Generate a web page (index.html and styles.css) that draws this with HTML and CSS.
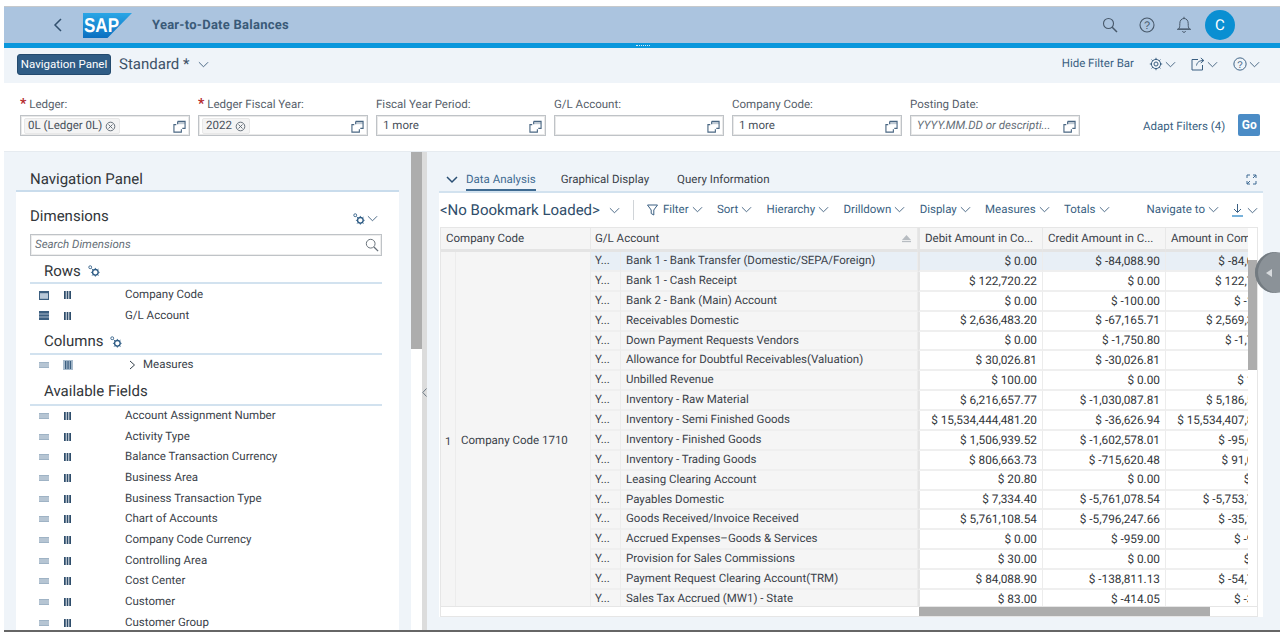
FILE: index.html
```html
<!DOCTYPE html>
<html lang="en">
<head>
<meta charset="utf-8">
<title>Year-to-Date Balances</title>
<link rel="stylesheet" href="styles.css">
</head>
<body>
<svg class="defs" width="0" height="0" aria-hidden="true">
  <defs>
    <symbol id="chev" viewBox="0 0 12 12"><path d="M1 3.5 6 8.5 11 3.5" fill="none" stroke="currentColor" stroke-width="1"/></symbol>
    <symbol id="vh" viewBox="0 0 14 14"><path d="M5 1.5h8v7.5h-3M5 1.5v3M3.5 5H1v8h8v-3" fill="none" stroke="currentColor" stroke-width="1.2"/><path d="M5 1.5h8v3H5z" fill="currentColor" opacity=".35"/></symbol>
    <symbol id="x" viewBox="0 0 12 12"><circle cx="6" cy="6" r="4.7" fill="none" stroke="currentColor"/><path d="M3.8 3.8 8.2 8.2M8.2 3.8 3.8 8.2" stroke="currentColor"/></symbol>
    <symbol id="search" viewBox="0 0 16 16"><circle cx="6.5" cy="6.5" r="5" fill="none" stroke="currentColor" stroke-width="1.1"/><path d="M10.2 10.2 15 15" stroke="currentColor" stroke-width="1.5"/></symbol>
    <symbol id="gears" viewBox="0 0 14 14"><circle cx="2.6" cy="2.6" r="1.7" fill="none" stroke="currentColor"/><circle cx="8.6" cy="8.6" r="3.3" fill="none" stroke="currentColor" stroke-width="1.6"/><path d="M8.6 3.4v1.6M8.6 12.2v1.4M3.4 8.6H5M12.2 8.6h1.4M4.2 4.2l1.7 1.7M11 6l1.3-1.2M11 11.2l1.2 1.2M6 11.2 4.8 12.4" stroke="currentColor"/></symbol>
    <symbol id="bars" viewBox="0 0 8 9"><path d="M0 0h2v9H0zM3 0h2v9H3zM6 0h2v9H6z" fill="currentColor"/></symbol>
    <symbol id="lines" viewBox="0 0 10 6"><path d="M0 0h10v6H0z" fill="currentColor" opacity=".75"/><path d="M0 2h10M0 4h10" stroke="#fff" stroke-width=".5"/></symbol>
    <symbol id="tbl" viewBox="0 0 10 9"><path d="M0 0h10v9H0z" fill="currentColor"/><path d="M1 2.2h8v5.6H1z" fill="#b9c9d9"/></symbol>
    <symbol id="tbl2" viewBox="0 0 10 9"><path d="M0 0h10v9H0z" fill="currentColor"/><path d="M0 3h10M0 6h10" stroke="#d5e0ea" stroke-width=".7"/></symbol>
  </defs>
</svg>
<div class="page">
  <header class="shell">
    <button class="back" type="button" aria-label="Back"><svg width="10" height="14" viewBox="0 0 10 14"><path d="M8 1 2 7l6 6" fill="none" stroke="currentColor" stroke-width="1.5"/></svg></button>
    <svg class="logo" width="49" height="25" viewBox="0 0 49 25" role="img" aria-label="SAP">
      <defs><linearGradient id="g" x1="0" y1="0" x2="0" y2="1"><stop offset="0" stop-color="#2aa6e6"/><stop offset="1" stop-color="#0a6fc0"/></linearGradient></defs>
      <path d="M0 0h49L24.500 25H0z" fill="url(#g)"/>
      <text x="1" y="19" class="logo-text" textLength="35" lengthAdjust="spacingAndGlyphs">SAP</text>
    </svg>
    <div class="app-title">Year-to-Date Balances</div>
    <div class="shell-actions">
      <svg class="sh-ico" width="16" height="16"><use href="#search"/></svg>
      <svg class="sh-ico" width="16" height="16" viewBox="0 0 16 16"><circle cx="8" cy="8" r="7" fill="none" stroke="currentColor" stroke-width="1.1"/><text x="8" y="12" text-anchor="middle" class="q">?</text></svg>
      <svg class="sh-ico" width="16" height="18" viewBox="0 0 16 18"><path d="M2.500 13c1.300-1.500 1.300-2.500 1.300-5.500S5.500 2.500 8 2.500s4.200 2 4.200 5 0 4 1.300 5.500zM1 13.300h14M6.300 15.300c.5 1.300 2.900 1.300 3.400 0M8 .8v1.700" fill="none" stroke="currentColor"/></svg>
      <div class="avatar">C</div>
    </div>
  </header>
  <div class="accent"><span class="grip"></span></div>

  <div class="subbar">
    <button class="nav-btn" type="button">Navigation Panel</button>
    <span class="variant">Standard *</span>
    <svg class="chev variant-chev"><use href="#chev"/></svg>
    <div class="subbar-actions">
      <span class="hide">Hide Filter Bar</span>
      <span class="sub-ico"><svg width="14" height="14" viewBox="0 0 14 14"><circle cx="7" cy="7" r="2" fill="none" stroke="currentColor"/><circle cx="7" cy="7" r="4.600" fill="none" stroke="currentColor" stroke-width="1"/><path d="M7 .8v1.800M7 11.400v1.800M.8 7h1.800M11.400 7h1.800M2.600 2.600l1.200 1.200M10.200 10.200l1.200 1.200M11.400 2.600l-1.200 1.200M3.800 10.200l-1.200 1.200" stroke="currentColor"/></svg><svg class="chev"><use href="#chev"/></svg></span>
      <span class="sub-ico"><svg width="14" height="14" viewBox="0 0 14 14"><path d="M7 2.500H1v10.500h10.500V8M5.500 8.500c.5-3 2.500-5 7-5M9.800 1l3 2.500-3 2.500" fill="none" stroke="currentColor"/></svg><svg class="chev"><use href="#chev"/></svg></span>
      <span class="sub-ico"><svg width="14" height="14" viewBox="0 0 16 16"><circle cx="8" cy="8" r="7" fill="none" stroke="currentColor" stroke-width="1.100"/><text x="8" y="12" text-anchor="middle" class="q">?</text></svg><svg class="chev"><use href="#chev"/></svg></span>
    </div>
  </div>

  <section class="filters">
    <div class="field">
      <label class="flabel"><span class="req">*</span> Ledger:</label>
      <div class="input"><span class="token">0L (Ledger 0L) <svg class="tx"><use href="#x"/></svg></span><svg class="vh"><use href="#vh"/></svg></div>
    </div>
    <div class="field">
      <label class="flabel"><span class="req">*</span> Ledger Fiscal Year:</label>
      <div class="input"><span class="token">2022 <svg class="tx"><use href="#x"/></svg></span><svg class="vh"><use href="#vh"/></svg></div>
    </div>
    <div class="field">
      <label class="flabel">Fiscal Year Period:</label>
      <div class="input"><span class="val">1 more</span><svg class="vh"><use href="#vh"/></svg></div>
    </div>
    <div class="field">
      <label class="flabel">G/L Account:</label>
      <div class="input"><svg class="vh"><use href="#vh"/></svg></div>
    </div>
    <div class="field">
      <label class="flabel">Company Code:</label>
      <div class="input"><span class="val">1 more</span><svg class="vh"><use href="#vh"/></svg></div>
    </div>
    <div class="field">
      <label class="flabel">Posting Date:</label>
      <div class="input"><span class="val ph">YYYY.MM.DD or descripti...</span><svg class="vh"><use href="#vh"/></svg></div>
    </div>
    <span class="adapt">Adapt Filters (4)</span>
    <button class="go" type="button">Go</button>
  </section>

  <main class="main">
    <aside class="left">
      <div class="left-inner">
        <h2 class="np-title">Navigation Panel</h2>
        <div class="np">
          <div class="dim-head"><span class="dim-title">Dimensions</span><span class="dim-tool"><svg width="12" height="12"><use href="#gears"/></svg><svg class="chev"><use href="#chev"/></svg></span></div>
          <div class="search"><span>Search Dimensions</span><svg width="14" height="14"><use href="#search"/></svg></div>
          <h3 class="sec sec-rows">Rows <svg width="12" height="12"><use href="#gears"/></svg></h3>
          <ul class="list list-rows">
            <li><svg class="i1"><use href="#tbl"/></svg><svg class="i2"><use href="#bars"/></svg><span>Company Code</span></li>
            <li><svg class="i1"><use href="#tbl2"/></svg><svg class="i2"><use href="#bars"/></svg><span>G/L Account</span></li>
          </ul>
          <h3 class="sec sec-cols">Columns <svg width="12" height="12"><use href="#gears"/></svg></h3>
          <ul class="list">
            <li class="measures"><svg class="i1 small"><use href="#lines"/></svg><svg class="i2 wide" viewBox="0 0 10 10"><path d="M0 0h10v10H0z" fill="#a9bccd"/><path d="M2 1h1.300v8H2zM4.400 1h1.300v8H4.400zM6.800 1h1.300v8H6.800z" fill="#3c5f80"/></svg><svg class="mchev" width="7" height="10" viewBox="0 0 7 10"><path d="M1 1l4.500 4L1 9" fill="none" stroke="currentColor"/></svg><span>Measures</span></li>
          </ul>
          <h3 class="sec sec-av">Available Fields</h3>
          <ul class="list avail">
            <li><svg class="i1 small"><use href="#lines"/></svg><svg class="i2"><use href="#bars"/></svg><span>Account Assignment Number</span></li>
            <li><svg class="i1 small"><use href="#lines"/></svg><svg class="i2"><use href="#bars"/></svg><span>Activity Type</span></li>
            <li><svg class="i1 small"><use href="#lines"/></svg><svg class="i2"><use href="#bars"/></svg><span>Balance Transaction Currency</span></li>
            <li><svg class="i1 small"><use href="#lines"/></svg><svg class="i2"><use href="#bars"/></svg><span>Business Area</span></li>
            <li><svg class="i1 small"><use href="#lines"/></svg><svg class="i2"><use href="#bars"/></svg><span>Business Transaction Type</span></li>
            <li><svg class="i1 small"><use href="#lines"/></svg><svg class="i2"><use href="#bars"/></svg><span>Chart of Accounts</span></li>
            <li><svg class="i1 small"><use href="#lines"/></svg><svg class="i2"><use href="#bars"/></svg><span>Company Code Currency</span></li>
            <li><svg class="i1 small"><use href="#lines"/></svg><svg class="i2"><use href="#bars"/></svg><span>Controlling Area</span></li>
            <li><svg class="i1 small"><use href="#lines"/></svg><svg class="i2"><use href="#bars"/></svg><span>Cost Center</span></li>
            <li><svg class="i1 small"><use href="#lines"/></svg><svg class="i2"><use href="#bars"/></svg><span>Customer</span></li>
            <li><svg class="i1 small"><use href="#lines"/></svg><svg class="i2"><use href="#bars"/></svg><span>Customer Group</span></li>
          </ul>
        </div>
      </div>
      <div class="lscroll"><div class="lthumb"></div></div>
    </aside>
    <div class="splitter"><svg width="5" height="9" viewBox="0 0 5 9"><path d="M4.500.5.800 4.500l3.700 4" fill="none" stroke="#6a7783"/></svg></div>
    <section class="right">
      <div class="tabs">
        <svg class="tab-chev" width="12" height="8" viewBox="0 0 12 8"><path d="M1 1l5 5 5-5" fill="none" stroke="currentColor" stroke-width="1.500"/></svg>
        <span class="tab active">Data Analysis</span>
        <span class="tab">Graphical Display</span>
        <span class="tab">Query Information</span>
        <svg class="fs" width="11" height="11" viewBox="0 0 11 11"><path d="M1 4V1h3M7 1h3v3M10 7v3H7M4 10H1V7M1 10l3-3M10 1 7 4" fill="none" stroke="currentColor"/></svg>
      </div>
      <div class="panel">
        <div class="toolbar">
          <span class="bookmark">&lt;No Bookmark Loaded&gt;</span>
          <svg class="chev book-chev"><use href="#chev"/></svg>
          <span class="sep"></span>
          <span class="tool"><svg width="11" height="12" viewBox="0 0 11 12"><path d="M.5 1h10L6.800 6v5L4.200 9.500V6z" fill="none" stroke="currentColor"/></svg><span class="ft">Filter</span><svg class="chev"><use href="#chev"/></svg></span>
          <span class="tool">Sort<svg class="chev"><use href="#chev"/></svg></span>
          <span class="tool">Hierarchy<svg class="chev"><use href="#chev"/></svg></span>
          <span class="tool">Drilldown<svg class="chev"><use href="#chev"/></svg></span>
          <span class="tool">Display<svg class="chev"><use href="#chev"/></svg></span>
          <span class="tool">Measures<svg class="chev"><use href="#chev"/></svg></span>
          <span class="tool">Totals<svg class="chev"><use href="#chev"/></svg></span>
          <span class="tool push">Navigate to<svg class="chev"><use href="#chev"/></svg></span>
          <span class="tool dl"><svg width="11" height="13" viewBox="0 0 11 13"><path d="M5.500 0v8M2 5l3.500 3.500L9 5" fill="none" stroke="currentColor"/><path d="M0 12h11" stroke="#1f7fc4" stroke-width="1.200"/></svg><svg class="chev"><use href="#chev"/></svg></span>
        </div>
        <div class="table-wrap">
          <div class="table-top">
            <div class="grid">
              <div class="h h2">Company Code</div>
              <div class="h h2 gl">G/L Account<svg class="sort" width="11" height="8" viewBox="0 0 11 8"><path d="M5.500 0 10 5H1z" fill="#b7bcc1"/><path d="M1 6.500h9" stroke="#b7bcc1" stroke-width="1.300"/></svg></div>
              <div class="h first">Debit Amount in Co...</div>
              <div class="h">Credit Amount in C...</div>
              <div class="h">Amount in Company Code Currency</div>
              <div class="c lab narrow">1</div>
              <div class="c lab co">Company Code 1710</div>

              <div class="c lab sel y">Y...</div><div class="c lab sel">Bank 1 - Bank Transfer (Domestic/SEPA/Foreign)</div><div class="c n sel first">$ 0.00</div><div class="c n sel">$ -84,088.90</div><div class="c n sel">$ -84,088.90</div>
              <div class="c lab y">Y...</div><div class="c lab">Bank 1 - Cash Receipt</div><div class="c n first">$ 122,720.22</div><div class="c n">$ 0.00</div><div class="c n">$ 122,720.22</div>
              <div class="c lab y">Y...</div><div class="c lab">Bank 2 - Bank (Main) Account</div><div class="c n first">$ 0.00</div><div class="c n">$ -100.00</div><div class="c n">$ -100.00</div>
              <div class="c lab y">Y...</div><div class="c lab">Receivables Domestic</div><div class="c n first">$ 2,636,483.20</div><div class="c n">$ -67,165.71</div><div class="c n">$ 2,569,317.49</div>
              <div class="c lab y">Y...</div><div class="c lab">Down Payment Requests Vendors</div><div class="c n first">$ 0.00</div><div class="c n">$ -1,750.80</div><div class="c n">$ -1,750.80</div>
              <div class="c lab y">Y...</div><div class="c lab">Allowance for Doubtful Receivables(Valuation)</div><div class="c n first">$ 30,026.81</div><div class="c n">$ -30,026.81</div><div class="c n">$ 0.00</div>
              <div class="c lab y">Y...</div><div class="c lab">Unbilled Revenue</div><div class="c n first">$ 100.00</div><div class="c n">$ 0.00</div><div class="c n">$ 100.00</div>
              <div class="c lab y">Y...</div><div class="c lab">Inventory - Raw Material</div><div class="c n first">$ 6,216,657.77</div><div class="c n">$ -1,030,087.81</div><div class="c n">$ 5,186,569.96</div>
              <div class="c lab y">Y...</div><div class="c lab">Inventory - Semi Finished Goods</div><div class="c n first">$ 15,534,444,481.20</div><div class="c n">$ -36,626.94</div><div class="c n">$ 15,534,407,854.26</div>
              <div class="c lab y">Y...</div><div class="c lab">Inventory - Finished Goods</div><div class="c n first">$ 1,506,939.52</div><div class="c n">$ -1,602,578.01</div><div class="c n">$ -95,638.49</div>
              <div class="c lab y">Y...</div><div class="c lab">Inventory - Trading Goods</div><div class="c n first">$ 806,663.73</div><div class="c n">$ -715,620.48</div><div class="c n">$ 91,043.25</div>
              <div class="c lab y">Y...</div><div class="c lab">Leasing Clearing Account</div><div class="c n first">$ 20.80</div><div class="c n">$ 0.00</div><div class="c n">$ 20.80</div>
              <div class="c lab y">Y...</div><div class="c lab">Payables Domestic</div><div class="c n first">$ 7,334.40</div><div class="c n">$ -5,761,078.54</div><div class="c n">$ -5,753,744.14</div>
              <div class="c lab y">Y...</div><div class="c lab">Goods Received/Invoice Received</div><div class="c n first">$ 5,761,108.54</div><div class="c n">$ -5,796,247.66</div><div class="c n">$ -35,139.12</div>
              <div class="c lab y">Y...</div><div class="c lab">Accrued Expenses–Goods &amp; Services</div><div class="c n first">$ 0.00</div><div class="c n">$ -959.00</div><div class="c n">$ -959.00</div>
              <div class="c lab y">Y...</div><div class="c lab">Provision for Sales Commissions</div><div class="c n first">$ 30.00</div><div class="c n">$ 0.00</div><div class="c n">$ 30.00</div>
              <div class="c lab y">Y...</div><div class="c lab">Payment Request Clearing Account(TRM)</div><div class="c n first">$ 84,088.90</div><div class="c n">$ -138,811.13</div><div class="c n">$ -54,722.23</div>
              <div class="c lab y">Y...</div><div class="c lab">Sales Tax Accrued (MW1) - State</div><div class="c n first">$ 83.00</div><div class="c n">$ -414.05</div><div class="c n">$ -331.05</div>
            </div>
            <div class="vscroll"><div class="vthumb"></div></div>
          </div>
          <div class="hscroll"><div class="hthumb"></div></div>
        </div>
      </div>
      <div class="handle"><svg width="6" height="8" viewBox="0 0 6 8"><path d="M6 0v8L0 4z" fill="#d7dadd"/></svg></div>
    </section>
  </main>
  <div class="foot"></div>
</div>
</body>
</html>
```
FILE: styles.css
```css
* { box-sizing: border-box; }
html, body { margin: 0; height: 632px; overflow: hidden; background: #fff; }
body { font: 11.500px/1.2 Roboto, "Liberation Sans", Arial, sans-serif; color: #32363a; text-rendering: geometricPrecision; }
.defs { position: absolute; }
ul { list-style: none; margin: 0; padding: 0; }
h2, h3 { margin: 0; font-weight: 400; }
button { font-family: inherit; border: 0; padding: 0; }
.page { height: 632px; padding: 6px 0 0 4px; display: flex; flex-direction: column; }
.chev { width: 11px; height: 11px; color: #3f5f7e; flex: none; }

/* shell */
.shell { height: 37px; flex: none; display: flex; align-items: center; background: #abc4df; border-top: 1px solid #c6c9cc; color: #31506e; }
.back { width: 12px; height: 14px; margin-left: 49px; background: none; color: #31506e; display: flex; }
.logo { margin-left: 18px; flex: none; }
.logo-text { font: 700 20px "Liberation Sans", sans-serif; fill: #fff; }
.app-title { margin-left: 20px; padding-top: 2px; font-size: 13px; font-weight: 700; color: #3a5a78; letter-spacing: .25px; }
.shell-actions { margin-left: auto; display: flex; align-items: center; gap: 21px; padding-right: 45px; color: #47586a; }
.q { font: 11px "Liberation Sans", sans-serif; fill: currentColor; }
.sh-ico { flex: none; }
.avatar { width: 30px; height: 30px; margin-left: -8px; border-radius: 50%; background: #0a8fd2; color: #fff; font-size: 15px; display: flex; align-items: center; justify-content: center; }
.accent { height: 5px; flex: none; background: #0a97dc; position: relative; }
.grip { position: absolute; left: 632px; top: 2px; width: 14px; border-top: 1px dotted #d6ecf8; }

/* sub bar */
.subbar { height: 35px; flex: none; background: #eff4f9; display: flex; align-items: center; padding: 0 10px 3px 13px; }
.nav-btn { width: 94px; height: 21px; border-radius: 3px; background: #2f5c85; border: 1px solid #234a6e; color: #fff; font-size: 11.500px; white-space: nowrap; }
.variant { margin-left: 8px; font-size: 15px; color: #3d5268; }
.variant-chev { margin-left: 9px; }
.subbar-actions { margin-left: auto; display: flex; align-items: center; color: #3a5f82; gap: 15px; padding-right: 10px; }
.hide { margin-right: 0; }
.sub-ico { display: flex; align-items: center; gap: 2px; color: #3a5f82; }

/* filters */
.filters { height: 69px; flex: none; display: flex; align-items: flex-start; padding: 15px 17px 0 16px; background: #fff; border-bottom: 1px solid #e6ebf0; }
.field { width: 170px; margin-right: 8px; display: flex; flex-direction: column; }
.flabel { height: 17px; color: #56606a; white-space: nowrap; }
.req { color: #b3262b; font-size: 14px; font-weight: 700; line-height: 10px; }
.input { height: 21px; display: flex; align-items: center; border: 1px solid #bfc3c7; box-shadow: 0 0 0 1px #e9e9e9 inset; padding: 1px 2px 0 3px; background: #fff; }
.token { display: flex; align-items: center; gap: 3px; height: 16px; padding: 0 3px; background: #f4f4f4; border: 1px solid #e8e8e8; border-radius: 2px; white-space: nowrap; color: #47505a; }
.tx { width: 11px; height: 11px; color: #5a6570; }
.val { padding-left: 3px; color: #47505a; white-space: nowrap; }
.ph { font-style: italic; color: #666f78; }
.vh { width: 13px; height: 13px; margin-left: auto; margin-right: 1px; color: #4a6783; flex: none; }
.adapt { margin: 22px 0 0 55px; color: #3a5f82; white-space: nowrap; }
.go { width: 22px; height: 22px; margin: 16px 0 0 13px; border-radius: 2px; background: #4b8cc6; color: #fff; font-size: 12px; font-weight: 700; }

/* main */
.main { flex: 1; min-height: 0; display: flex; background: #eff4f9; overflow: hidden; }
.left { width: 418px; flex: none; display: flex; overflow: hidden; }
.left-inner { width: 407px; flex: none; padding: 0 12px; }
.np-title { font-size: 15px; height: 38px; padding: 17.500px 0 0 14px; line-height: 19px; color: #32363a; }
.np { height: 500px; background: #fff; border-top: 2px solid #c9dcec; padding: 0 17px 0 14px; }
.dim-head { height: 42px; display: flex; align-items: flex-start; padding-top: 14.500px; }
.dim-title { font-size: 15px; }
.dim-tool { margin-left: auto; margin-top: 6px; margin-right: 4px; display: flex; gap: 2px; color: #2f5c85; }
.search { height: 22px; display: flex; align-items: center; justify-content: space-between; padding: 0 2px 0 4px; border: 1px solid #bfc3c7; box-shadow: 0 0 0 1px #ededed inset; font-style: italic; color: #666f78; }
.sec { font-size: 15px; padding-left: 14px; border-bottom: 2px solid #d2e2ef; display: flex; align-items: center; gap: 7px; color: #32363a; line-height: 19px; }
.sec svg { color: #2f5c85; }
.sec-rows { height: 28px; padding-top: 4px; }
.sec-cols { height: 29px; padding-top: 4.500px; }
.sec-av { height: 30px; padding-top: 3.400px; }
.list li { height: 20.500px; display: flex; align-items: center; white-space: nowrap; color: #3a4149; padding-left: 9px; }
.list-rows { padding-top: 1px; }
.avail li { height: 20.700px; }
.i1 { width: 10px; height: 9px; color: #3c5f80; flex: none; }
.i1.small { height: 6px; color: #7f99b1; }
.i2 { width: 7px; height: 8px; margin-left: 15px; margin-right: 54px; color: #2e4d6b; flex: none; }
.i2.wide { width: 10px; height: 10px; margin-left: 14px; margin-right: 0; }
.mchev { margin-left: 56px; margin-right: 7px; flex: none; color: #34404b; }
.lscroll { width: 11px; flex: none; background: #fff; }
.lthumb { height: 197px; background: #adadad; }
.splitter { width: 5px; flex: none; background: #dcdcdc; display: flex; align-items: center; justify-content: center; position: relative; }
.splitter svg { margin-top: 2px; }

.right { flex: 1; min-width: 0; padding-left: 12px; position: relative; }
.tabs { height: 39px; width: 824px; display: flex; align-items: flex-start; position: relative; padding-top: 20.500px; color: #3a4149; }
.tab-chev { margin: 3px 8px 0 7px; color: #2a4f74; flex: none; }
.tab { height: 18.500px; margin-right: 28px; white-space: nowrap; }
.tab.active { color: #3f6b92; border-bottom: 2px solid #3f6b92; margin-right: 25px; }
.fs { margin-left: auto; margin-right: 6px; margin-top: 1px; color: #3e6a94; }
.panel { width: 824px; height: 426px; background: #fff; border-top: 2px solid #d2e2ef; padding: 0 5px 0 1px; }
.toolbar { height: 34px; display: flex; align-items: center; color: #3a5f82; white-space: nowrap; }
.bookmark { font-size: 15px; color: #2f4d6a; }
.book-chev { margin-left: 9px; }
.sep { width: 1px; height: 20px; background: #d0d4d8; margin: 0 13px 0 13px; }
.tool { display: flex; align-items: center; gap: 3px; margin-right: 14.300px; }
.tool:first-of-type { margin-left: 1px; }
.ft { margin-left: 2px; }
.push { margin-left: auto; margin-right: 13px; }
.dl { margin-right: 0; gap: 4px; }
.table-wrap { height: 390px; border: 1px solid #e6e6e6; display: flex; flex-direction: column; }
.table-top { flex: 1; min-height: 0; display: flex; }
.grid { width: 807px; flex: none; overflow: hidden; display: grid; grid-template-columns: 15px 135px 30px 297px 125px 123px 123px; grid-template-rows: 24px repeat(18, 19.880px); }
.h { background: #f5f5f5; border-right: 1px solid #e8e8e8; border-bottom: 3px solid #e4e4e4; padding: 0 5px; display: flex; align-items: center; white-space: nowrap; overflow: hidden; color: #3a4149; }
.h2 { grid-column: span 2; }
.h.gl { justify-content: space-between; padding: 0 5px 0 4px; }
.c { border-bottom: 2px solid #efefef; border-right: 1px solid #ececec; display: flex; align-items: center; padding: 0 5px; white-space: nowrap; overflow: hidden; }
.lab { background: #f5f5f5; color: #3a4149; }
.y { justify-content: flex-start; padding-left: 4px; }
.n { justify-content: flex-end; padding-right: 5px; background: #fff; font-size: 11.800px; }
.first { border-left: 2px solid #e4e4e4; }
.sel { background: #e8eff6; }
.narrow { grid-column: 1; grid-row: 2 / span 18; justify-content: center; padding: 23px 0 0; font-size: 11px; }
.co { grid-column: 2; grid-row: 2 / span 18; padding-top: 23px; }
.vscroll { flex: 1; position: relative; }
.vthumb { height: 110px; margin-top: 32px; background: #adadad; }
.hscroll { height: 10px; flex: none; padding-left: 478px; border-top: 1px solid #e6e6e6; }
.hthumb { width: 291px; height: 100%; background: #adadad; }
.handle { position: absolute; left: 828px; top: 100px; width: 41px; height: 41px; border-radius: 50%; background: #8b9298; box-shadow: inset 3px 0 0 #737b81; display: flex; align-items: center; padding-left: 11px; }
.foot { height: 2px; flex: none; background: #666; }
```
